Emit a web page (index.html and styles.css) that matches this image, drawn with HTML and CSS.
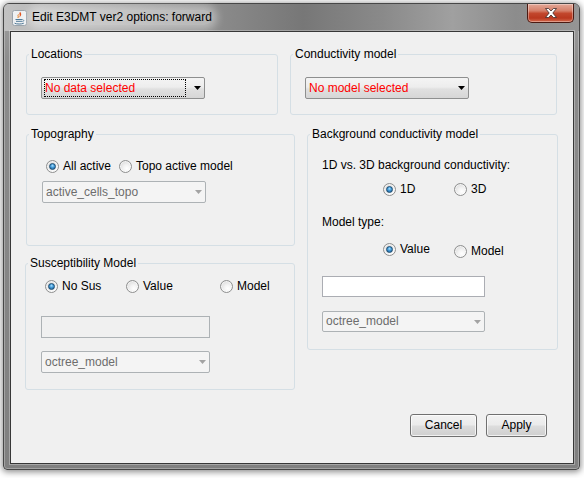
FILE: index.html
```html
<!DOCTYPE html>
<html>
<head>
<meta charset="utf-8">
<title>Edit E3DMT ver2 options: forward</title>
<link rel="stylesheet" href="styles.css">
</head>
<body>
<div class="window">
  <div class="titlebar">
    <svg class="app-icon" width="15" height="16" viewBox="0 0 15 16">
      <rect x="0.5" y="0.5" width="14" height="15" rx="2" fill="#eef0f2" stroke="#9aa3ab"/>
      <path d="M8.2 1.8 C6 3.8 9.2 5 7 7.4 C9.4 6.2 10 4.2 8.2 1.8 Z" fill="#e2521d"/>
      <path d="M6.4 4.4 C5.3 5.8 7 6.4 5.9 8" stroke="#e76f00" stroke-width="0.9" fill="none"/>
      <path d="M3.5 9.5 H10.5 M4 11.3 H10 M2.6 13.2 C4.6 14.3 9.6 14.3 11.8 13.2" stroke="#4e7896" stroke-width="1" fill="none"/>
      <path d="M10.6 9.8 C12.2 9.8 12.2 11.4 10.4 11.6" stroke="#4e7896" stroke-width="0.9" fill="none"/>
    </svg>
    <span class="title">Edit E3DMT ver2 options: forward</span>
    <div class="close">
      <svg width="12" height="10" viewBox="0 0 12 10">
        <polygon points="0.5,0.5 3.6,0.5 6,3 8.4,0.5 11.5,0.5 7.8,5 11.5,9.5 8.4,9.5 6,7 3.6,9.5 0.5,9.5 4.2,5" fill="#fff" stroke="#3b2a28" stroke-width="0.8" stroke-linejoin="round"/>
      </svg>
    </div>
  </div>
  <div class="client">
    <div class="row-top">
      <fieldset class="group g-loc">
        <legend>Locations</legend>
        <div class="gbody-top">
          <div class="combo w164 h22 focused">
            <span class="txt red">No data selected</span>
            <span class="arrow"><svg width="7" height="4" viewBox="0 0 7 4"><polygon points="0,0 7,0 3.5,4" fill="#000"/></svg></span>
          </div>
        </div>
      </fieldset>
      <fieldset class="group g-cond">
        <legend>Conductivity model</legend>
        <div class="gbody-top">
          <div class="combo w164 h22">
            <span class="txt red">No model selected</span>
            <span class="arrow"><svg width="7" height="4" viewBox="0 0 7 4"><polygon points="0,0 7,0 3.5,4" fill="#000"/></svg></span>
          </div>
        </div>
      </fieldset>
    </div>
    <div class="row-mid">
      <div class="col-left">
        <fieldset class="group g-topo">
          <legend>Topography</legend>
          <div class="topo-body">
            <div class="radios topo-radios">
              <span class="rb"><span class="radio on"><span class="dot"></span></span><span>All active</span></span>
              <span class="rb"><span class="radio"></span><span>Topo active model</span></span>
            </div>
            <div class="combo disabled w164 h22 topo-combo">
              <span class="txt">active_cells_topo</span>
              <span class="arrow"><svg width="7" height="4" viewBox="0 0 7 4"><polygon points="0,0 7,0 3.5,4" fill="#a3a3a3"/></svg></span>
            </div>
          </div>
        </fieldset>
        <fieldset class="group g-sus">
          <legend>Susceptibility Model</legend>
          <div class="sus-body">
            <div class="radios sus-radios">
              <span class="rb"><span class="radio on"><span class="dot"></span></span><span>No Sus</span></span>
              <span class="rb"><span class="radio"></span><span>Value</span></span>
              <span class="rb"><span class="radio"></span><span>Model</span></span>
            </div>
            <div class="tf disabled w169 h22 sus-tf"></div>
            <div class="combo disabled w169 h22 sus-combo">
              <span class="txt">octree_model</span>
              <span class="arrow"><svg width="7" height="4" viewBox="0 0 7 4"><polygon points="0,0 7,0 3.5,4" fill="#a3a3a3"/></svg></span>
            </div>
          </div>
        </fieldset>
      </div>
      <fieldset class="group g-bg">
        <legend>Background conductivity model</legend>
        <div class="bg-body">
          <div class="lbl">1D vs. 3D background conductivity:</div>
          <div class="radios bg-radios r1">
            <span class="rb"><span class="radio on"><span class="dot"></span></span><span>1D</span></span>
            <span class="rb"><span class="radio"></span><span>3D</span></span>
          </div>
          <div class="lbl lbl2">Model type:</div>
          <div class="radios bg-radios r2">
            <span class="rb"><span class="radio on"><span class="dot"></span></span><span>Value</span></span>
            <span class="rb shift2"><span class="radio"></span><span>Model</span></span>
          </div>
          <div class="tf w163 h21 bg-tf"></div>
          <div class="combo disabled w163 h21 bg-combo">
            <span class="txt">octree_model</span>
            <span class="arrow"><svg width="7" height="4" viewBox="0 0 7 4"><polygon points="0,0 7,0 3.5,4" fill="#a3a3a3"/></svg></span>
          </div>
        </div>
      </fieldset>
    </div>
    <div class="buttons">
      <div class="btn btn-cancel">Cancel</div>
      <div class="btn btn-apply">Apply</div>
    </div>
  </div>
</div>
</body>
</html>
```

FILE: styles.css
```css
* { box-sizing: border-box; }
html, body { margin: 0; padding: 0; }
body {
  width: 584px;
  height: 478px;
  overflow: hidden;
  background: #ffffff;
  font-family: "Liberation Sans", Arial, sans-serif;
  font-size: 12px;
  color: #000;
}

.window {
  width: 577px;
  height: 467px;
  margin: 3px 0 0 3px;
  border: 1px solid #474747;
  border-radius: 6px 6px 4px 4px;
  background: linear-gradient(#a2a2a2, #8c8c8c 60px, #808080);
  box-shadow: 0 1px 6px 1px rgba(0, 0, 0, 0.45), inset 0 0 0 1px rgba(255, 255, 255, 0.28);
  display: flex;
  flex-direction: column;
}

.titlebar {
  height: 27px;
  flex: none;
  display: flex;
  align-items: flex-start;
  border-radius: 5px 5px 0 0;
  background: linear-gradient(to right, #c2c2c2 0%, #acacac 14%, #8f8f8f 34%, #777777 52%, #8a8a8a 66%, #a0a0a0 78%, #8c8c8c 89%, #959595 100%);
}

.app-icon { flex: none; margin: 6px 0 0 8px; }

.title {
  margin: 6px 0 0 5px;
  line-height: 15px;
  white-space: nowrap;
  border-radius: 8px;
  background: rgba(255, 255, 255, 0.38);
  box-shadow: 0 0 8px 5px rgba(255, 255, 255, 0.38);
}

.close {
  flex: none;
  margin-left: auto;
  margin-right: 5px;
  width: 47px;
  height: 19px;
  border: 1px solid #4b1a12;
  border-top: none;
  border-radius: 0 0 5px 5px;
  background: linear-gradient(#e3a898 0%, #d57f69 38%, #c2472d 52%, #b9381f 78%, #d46a4e 100%);
  box-shadow: inset 0 0 0 1px rgba(255, 255, 255, 0.35);
  display: flex;
  align-items: center;
  justify-content: center;
}

.client {
  flex: 1;
  margin: 0 5px 5px 6px;
  border: 1px solid #383838;
  background: #f0f0f0;
  box-shadow: 0 0 0 1px rgba(255, 255, 255, 0.3);
}

/* group boxes */
.group {
  margin: 0;
  padding: 0;
  min-width: 0;
  border: 1px solid #d5dfe5;
  border-radius: 3px;
}
.group legend {
  margin-left: 2px;
  padding: 0 2px;
  line-height: 15px;
  font-size: 12px;
}

.row-top {
  display: flex;
  align-items: flex-start;
  margin: 15px 0 0 15px;
}
.g-loc { width: 252px; }
.g-cond { width: 267px; margin-left: 12px; }
.gbody-top { padding: 15px 0 15px 14px; }

.row-mid {
  display: flex;
  align-items: flex-start;
  margin: 12px 0 0 14px;
}
.col-left { display: flex; flex-direction: column; }
.g-topo { width: 269px; margin-left: 1px; }
.g-sus { width: 270px; margin-top: 10px; }
.g-bg { width: 251px; margin-left: 12px; }

.topo-body { padding: 16px 0 42px 15px; }
.topo-combo { margin-top: 7px; }

.sus-body { padding: 7px 0 16px 15px; }
.sus-tf { margin-top: 22px; }
.sus-combo { margin-top: 13px; }

.bg-body { padding: 16px 0 17px 14px; }
.lbl { line-height: 15px; white-space: nowrap; }
.lbl2 { margin-top: 18px; }
.r1 { margin-top: 8px; }
.r2 { margin-top: 10px; }
.bg-tf { margin-top: 20px; }
.bg-combo { margin-top: 14px; }

/* radio buttons */
.radios {
  display: grid;
  height: 16px;
  align-items: center;
  white-space: nowrap;
}
.topo-radios { grid-template-columns: 73px auto; margin-left: 4px; }
.sus-radios { grid-template-columns: 81px 94px auto; margin-left: 4px; }
.bg-radios { grid-template-columns: 71px auto; margin-left: 61px; }

.rb { display: flex; align-items: center; gap: 4px; line-height: 15px; }
.shift2 { margin-top: 4px; }

.radio {
  flex: none;
  width: 13px;
  height: 13px;
  border: 1px solid #8e8f8f;
  border-radius: 50%;
  background: radial-gradient(circle at 62% 68%, #ffffff 0%, #f3f3f3 35%, #d0d0d0 100%);
  box-shadow: inset 0 0 0 1px rgba(255, 255, 255, 0.6);
  display: flex;
  align-items: center;
  justify-content: center;
}
.radio .dot {
  width: 7px;
  height: 7px;
  border-radius: 50%;
  border: 1px solid #1b4a6e;
  background: radial-gradient(circle at 50% 35%, #a8e0ff 0%, #3f97d6 45%, #1e5a8a 100%);
}

/* combos & text fields */
.w164 { width: 164px; }
.w169 { width: 169px; }
.w163 { width: 163px; }
.h22 { height: 22px; }
.h21 { height: 21px; }

.combo {
  display: flex;
  align-items: center;
  border: 1px solid #8e8f8f;
  border-radius: 2px;
  background: linear-gradient(#f4f4f4, #ededed 45%, #e0e0e0 55%, #d6d6d6);
}
.combo .txt {
  flex: 1;
  padding-left: 3px;
  line-height: 15px;
  white-space: nowrap;
  overflow: hidden;
}
.combo .arrow {
  flex: none;
  width: 14px;
  display: flex;
  justify-content: center;
}
.combo .arrow svg { display: block; }
.combo.focused .txt {
  margin: 2px 4px 2px 2px;
  height: 18px;
  padding-left: 0;
  line-height: 16px;
  border: 1px dotted #000;
}
.combo.disabled {
  background: #f4f4f4;
  border-color: #adb2b5;
  color: #6d6d6d;
}
.red { color: #ff0000; }

.tf {
  border: 1px solid #abadb3;
  background: #ffffff;
}
.tf.disabled {
  background: #f0f0f0;
  border-color: #adb2b5;
}

/* buttons */
.buttons {
  display: flex;
  justify-content: flex-end;
  gap: 9px;
  margin: 24px 26px 0 0;
}
.btn {
  height: 23px;
  border: 1px solid #707070;
  border-radius: 3px;
  background: linear-gradient(#f2f2f2, #ebebeb 48%, #dddddd 52%, #cfcfcf);
  box-shadow: inset 0 0 0 1px rgba(255, 255, 255, 0.7);
  display: flex;
  align-items: center;
  justify-content: center;
  line-height: 15px;
}
.btn-cancel { width: 67px; }
.btn-apply { width: 61px; }
```
